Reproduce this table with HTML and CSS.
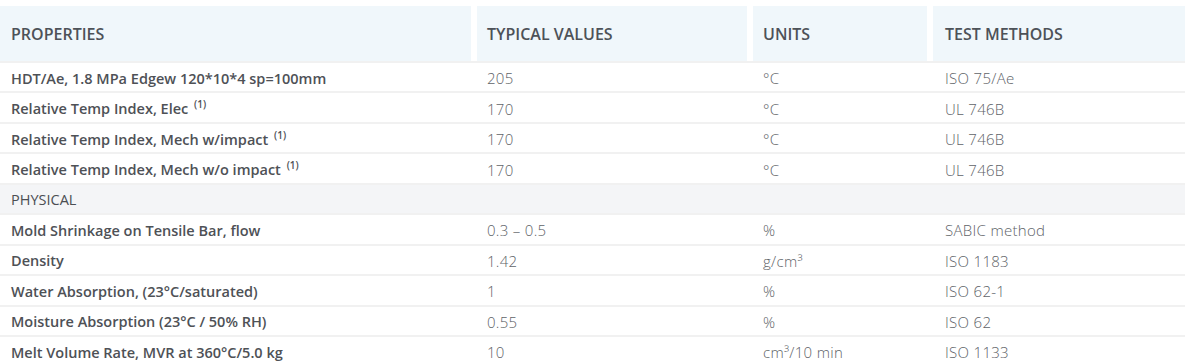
FILE: index.html
```html
<!DOCTYPE html>
<html>
<head>
<meta charset="utf-8">
<link rel="stylesheet" href="styles.css">
</head>
<body>
<table class="props">
  <colgroup>
    <col class="c1"><col class="c2"><col class="c3"><col class="c4">
  </colgroup>
  <thead>
    <tr>
      <th>PROPERTIES</th>
      <th>TYPICAL VALUES</th>
      <th>UNITS</th>
      <th class="last">TEST METHODS</th>
    </tr>
  </thead>
  <tbody>
    <tr><td class="lbl">HDT/Ae, 1.8 MPa Edgew 120*10*4 sp=100mm</td><td>205</td><td>°C</td><td class="last">ISO 75/Ae</td></tr>
    <tr><td class="lbl">Relative Temp Index, Elec <sup>(1)</sup></td><td>170</td><td>°C</td><td class="last">UL 746B</td></tr>
    <tr><td class="lbl">Relative Temp Index, Mech w/impact <sup>(1)</sup></td><td>170</td><td>°C</td><td class="last">UL 746B</td></tr>
    <tr><td class="lbl">Relative Temp Index, Mech w/o impact <sup>(1)</sup></td><td>170</td><td>°C</td><td class="last">UL 746B</td></tr>
    <tr class="section"><td class="sec">PHYSICAL</td><td></td><td></td><td class="last"></td></tr>
    <tr><td class="lbl">Mold Shrinkage on Tensile Bar, flow</td><td>0.3 – 0.5</td><td>%</td><td class="last">SABIC method</td></tr>
    <tr><td class="lbl">Density</td><td>1.42</td><td>g/cm³</td><td class="last">ISO 1183</td></tr>
    <tr><td class="lbl">Water Absorption, (23°C/saturated)</td><td>1</td><td>%</td><td class="last">ISO 62-1</td></tr>
    <tr><td class="lbl">Moisture Absorption (23°C / 50% RH)</td><td>0.55</td><td>%</td><td class="last">ISO 62</td></tr>
    <tr><td class="lbl">Melt Volume Rate, MVR at 360°C/5.0 kg</td><td>10</td><td>cm³/10 min</td><td class="last">ISO 1133</td></tr>
  </tbody>
</table>
</body>
</html>
```
FILE: styles.css
```css
html, body {
  margin: 0;
  padding: 0;
  background: #ffffff;
}
body {
  padding-top: 6px;
  font-family: "Open Sans", "Noto Sans", sans-serif;
}
.props {
  width: 1185px;
  border-collapse: separate;
  border-spacing: 0;
  table-layout: fixed;
}
.c1 { width: 471px; }
.c2 { width: 276px; }
.c3 { width: 180px; }
.c4 { width: 258px; }

.props th {
  height: 55px;
  padding: 0 0 0 10px;
  background: #f0f7fb;
  border-left: 6px solid #ffffff;
  text-align: left;
  font-size: 16px;
  font-weight: 600;
  color: #4d5258;
}
.props th:first-child {
  border-left: 0;
  padding-left: 11px;
}
.props th.last { padding-left: 12px; }

.props td {
  height: 26.45px;
  padding: 2px 0 0 16px;
  border-top: 2px solid #f1f1f1;
  font-size: 15px;
  font-weight: 300;
  letter-spacing: 0.3px;
  color: #606368;
  white-space: nowrap;
}
.props td:first-child { padding-left: 11px; }
.props td.last { padding-left: 18px; }
.props td.lbl {
  font-size: 14.5px;
  font-weight: 600;
  letter-spacing: 0;
  color: #4e5156;
}
.props td.sec {
  font-size: 14.5px;
  font-weight: 500;
  letter-spacing: 0;
  color: #4b4e53;
}
.props tr.section td {
  background: #f4f5f7;
}
.props sup {
  font-size: 10px;
  vertical-align: 6px;
  line-height: 0;
  margin-left: 2px;
}
```
